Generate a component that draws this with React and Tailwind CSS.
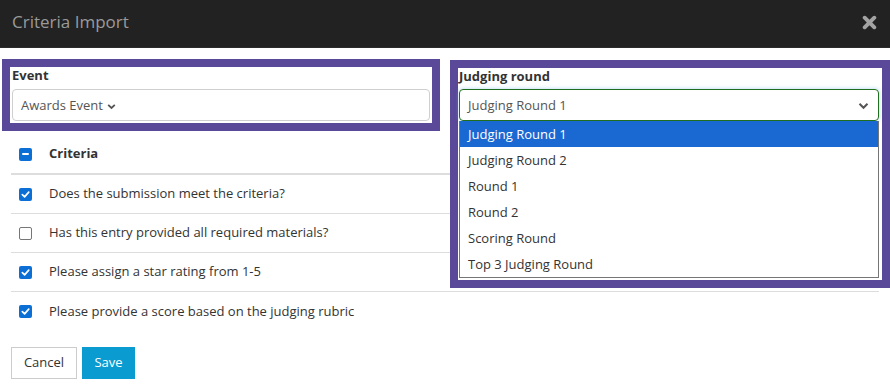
import React from "react";

const Check = ({ state }) => {
  if (state === "off") {
    return <span className="block w-[13px] h-[13px] rounded-[2px] border border-[#767676] bg-white" />;
  }
  return (
    <span className="flex items-center justify-center w-[13px] h-[13px] rounded-[2px] bg-[#0b6fd6]">
      {state === "on" ? (
        <svg width="9" height="9" viewBox="0 0 10 10">
          <path d="M1.5 5.2 L4 7.6 L8.6 2.4" fill="none" stroke="white" strokeWidth="1.9" strokeLinecap="round" strokeLinejoin="round" />
        </svg>
      ) : (
        <span className="block w-[7px] h-[2px] bg-white rounded-[1px]" />
      )}
    </span>
  );
};

const rows = [
  ["on", "Does the submission meet the criteria?"],
  ["off", "Has this entry provided all required materials?"],
  ["on", "Please assign a star rating from 1-5"],
  ["on", "Please provide a score based on the judging rubric"],
];

const options = ["Judging Round 1", "Judging Round 2", "Round 1", "Round 2", "Scoring Round", "Top 3 Judging Round"];

export default function App() {
  return (
    <div className="w-[890px] h-[390px] bg-white overflow-hidden text-[13px] text-[#333]" style={{ fontFamily: '"Open Sans", sans-serif' }}>
      <div className="h-[48px] bg-[#222222] flex items-center justify-between pl-3 pr-[13px] pb-[3px] border-b border-[#2c2c2c]">
        <span className="text-[17px] text-[#9a9a9a]">Criteria Import</span>
        <svg width="15" height="15" viewBox="0 0 14 14">
          <path d="M2.5 2.5 L11.5 11.5 M11.5 2.5 L2.5 11.5" stroke="#a3a3a3" strokeWidth="3.6" strokeLinecap="round" />
        </svg>
      </div>

      <div className="mt-[11px] flex">
        <div className="ml-[2px] w-[438px] h-[72px] border-[8px] border-[#5a4898] px-[2px]">
          <div className="font-bold leading-[17px] h-[22px]">Event</div>
          <div className="h-[32px] pt-[1px] border border-[#cfcfcf] rounded-[4px] flex items-center pl-[8px] text-[#555]">
            Awards Event
            <svg className="ml-[4px] mt-[2px]" width="9" height="7" viewBox="0 0 9 7">
              <path d="M1.2 1.8 L4.5 5 L7.8 1.8" fill="none" stroke="#555" strokeWidth="1.8" />
            </svg>
          </div>
        </div>
        <div className="ml-[10px] w-[440px] relative">
          <div className="absolute left-0 top-[1px] w-[440px] h-[228px] border-[8px] border-[#5a4898] bg-white pl-[1px] pr-[3px] z-10">
            <div className="font-bold leading-[16px] h-[21px]">Judging round</div>
            <div className="h-[32px] pt-[1px] border border-[#1f6f1f] rounded-[4px] flex items-center justify-between pl-[8px] pr-[9px] text-[#555] shadow-[0_0_4px_rgba(102,175,233,0.5)]">
              <span>Judging Round 1</span>
              <svg width="11" height="8" viewBox="0 0 11 8">
                <path d="M1.5 1.8 L5.5 5.8 L9.5 1.8" fill="none" stroke="#555" strokeWidth="2" />
              </svg>
            </div>
            <div className="border border-[#767676] border-t-0">
              {options.map((o, i) => (
                <div key={o} className={"h-[26px] pt-[1px] flex items-center pl-[8px] " + (i === 0 ? "bg-[#1a68d2] text-white" : "text-[#333]")}>
                  {o}
                </div>
              ))}
            </div>
          </div>
        </div>
      </div>

      <div className="mt-[4px] ml-[11px] w-[868px]">
        <div className="h-[40px] flex items-center border-b-2 border-[#dddddd]">
          <div className="w-[38px] pl-[8px]"><Check state="mixed" /></div>
          <span className="font-bold">Criteria</span>
        </div>
        {rows.map(([s, t], i) => (
          <div key={t} className={"h-[39px] flex items-center " + (i < 3 ? "border-b border-[#dddddd]" : "")}>
            <div className="w-[38px] pl-[8px]"><Check state={s} /></div>
            <span>{t}</span>
          </div>
        ))}
      </div>

      <div className="mt-[16px] ml-[11px] flex gap-[5px]">
        <button className="h-[32px] w-[66px] border border-[#cccccc] bg-white text-[#333]">Cancel</button>
        <button className="h-[32px] w-[53px] border border-[#0a9bd0] bg-[#0a9bd0] text-white">Save</button>
      </div>
    </div>
  );
}
